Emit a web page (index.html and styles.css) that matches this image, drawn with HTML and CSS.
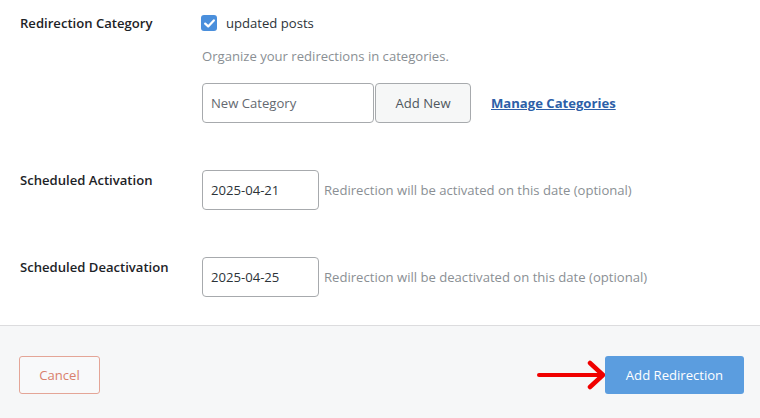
FILE: index.html
```html
<!DOCTYPE html>
<html lang="en">
<head>
    <meta charset="UTF-8">
    <meta name="viewport" content="width=device-width, initial-scale=1.0">
    <title>Add Redirection</title>
    <link rel="stylesheet" href="styles.css">
</head>
<body>
    <form class="redirect-form">
        <div class="form-body">
            <div class="form-row">
                <label class="row-label">Redirection Category</label>
                <div class="row-field">
                    <label class="check-line">
                        <span class="check-box">
                            <svg width="11" height="9" viewBox="0 0 11 9"><path d="M1.2 4.6 L4.2 7.4 L9.8 1.4" fill="none" stroke="#fff" stroke-width="2.2" stroke-linecap="round" stroke-linejoin="round"/></svg>
                        </span>
                        updated posts
                    </label>
                    <p class="field-desc">Organize your redirections in categories.</p>
                    <div class="category-add">
                        <input type="text" class="text-input category-input" placeholder="New Category">
                        <button type="button" class="btn-secondary">Add New</button>
                        <a href="#" class="manage-link">Manage Categories</a>
                    </div>
                </div>
            </div>
            <div class="form-row">
                <label class="row-label">Scheduled Activation</label>
                <div class="row-field inline-field">
                    <input type="text" class="text-input date-input" value="2025-04-21">
                    <span class="inline-desc">Redirection will be activated on this date (optional)</span>
                </div>
            </div>
            <div class="form-row">
                <label class="row-label">Scheduled Deactivation</label>
                <div class="row-field inline-field">
                    <input type="text" class="text-input date-input" value="2025-04-25">
                    <span class="inline-desc">Redirection will be deactivated on this date (optional)</span>
                </div>
            </div>
        </div>
        <div class="form-footer">
            <button type="button" class="btn-cancel">Cancel</button>
            <div class="footer-right">
                <svg class="arrow" width="72" height="30" viewBox="0 0 72 30">
                    <path d="M3 15 H66" stroke="#f00000" stroke-width="4" stroke-linecap="round"/>
                    <path d="M54 3 L67 15 L54 27" fill="none" stroke="#f00000" stroke-width="4.5" stroke-linecap="round" stroke-linejoin="round"/>
                </svg>
                <button type="button" class="btn-primary">Add Redirection</button>
            </div>
        </div>
    </form>
</body>
</html>
```

FILE: styles.css
```css
body {
    font-family: "Open Sans", Arial, sans-serif;
    font-size: 13.1px;
    color: #1d2327;
    margin: 0;
    background: #fff;
}
.redirect-form {
    width: 760px;
    height: 418px;
    display: flex;
    flex-direction: column;
}
.form-body {
    padding: 13px 0 0 20px;
    flex: 1;
    min-height: 0;
    overflow: hidden;
}
.form-row {
    display: grid;
    grid-template-columns: 181px 1fr;
    margin-bottom: 47px;
}
.row-label {
    font-weight: 600;
    color: #1d2327;
    padding-top: 1px;
}
.check-line {
    display: flex;
    align-items: center;
    gap: 9px;
    height: 20px;
    color: #2c3338;
}
.check-box {
    width: 16px;
    height: 16px;
    border-radius: 3px;
    background: #4a8fdc;
    display: flex;
    align-items: center;
    justify-content: center;
}
.field-desc {
    margin: 14px 1px 0;
    color: #8a8f94;
}
.category-add {
    display: flex;
    align-items: center;
    margin-top: 18px;
    margin-left: 1px;
}
.text-input {
    font-family: inherit;
    font-size: 13.1px;
    height: 40px;
    box-sizing: border-box;
    border: 1px solid #a7aaad;
    border-radius: 4px;
    padding: 0 8px;
    color: #2c3338;
    background: #fff;
}
.text-input::placeholder {
    color: #646970;
}
.category-input {
    width: 172px;
}
.btn-secondary {
    font-family: inherit;
    font-size: 13.1px;
    height: 40px;
    width: 96px;
    margin-left: 1px;
    border: 1px solid #a7aaad;
    border-radius: 4px;
    background: #f6f7f7;
    color: #50575e;
}
.manage-link {
    margin-left: 20px;
    font-weight: 700;
    color: #2d5fa8;
    text-decoration: underline;
}
.inline-field {
    display: flex;
    align-items: center;
    margin-left: 1px;
}
.date-input {
    width: 117px;
}
.inline-desc {
    margin-left: 5px;
    color: #8a8f94;
}
.form-footer {
    height: 93px;
    flex-shrink: 0;
    box-sizing: border-box;
    border-top: 1px solid #dcdcde;
    background: #f6f7f8;
    display: flex;
    justify-content: space-between;
    align-items: center;
    padding: 5px 16px 0 19px;
}
.btn-cancel {
    font-family: inherit;
    font-size: 13.1px;
    width: 81px;
    height: 38px;
    border: 1px solid #e4a597;
    border-radius: 3px;
    background: #f8f9fa;
    color: #d9806c;
}
.footer-right {
    display: flex;
    align-items: center;
}
.arrow {
    margin-right: -3px;
}
.btn-primary {
    font-family: inherit;
    font-size: 13.1px;
    width: 139px;
    height: 38px;
    border: none;
    border-radius: 3px;
    background: #5b9ddf;
    color: #fff;
}
```
